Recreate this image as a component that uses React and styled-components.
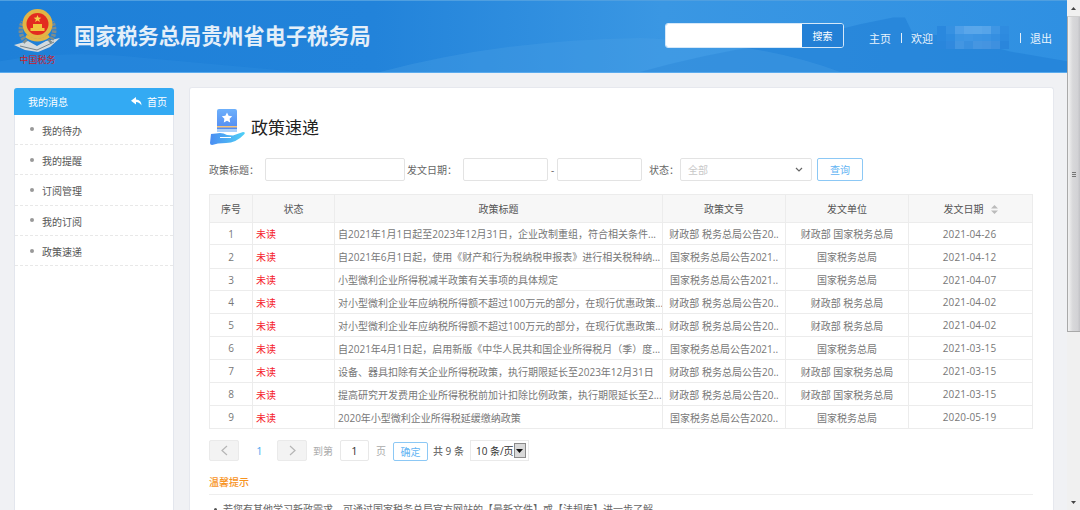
import React from "react";
import styled, { createGlobalStyle } from "styled-components";

const GlobalStyle = createGlobalStyle`
    html, body {
        margin: 0;
        padding: 0;
        height: 100%;
        overflow: hidden;
    }
    body {
        font-family: "Open Sans", "Noto Sans CJK SC", sans-serif;
        font-size: 10px;
        color: #666;
        background: #fff;
    }
    * {
        box-sizing: border-box;
    }
`;

const Page = styled.div`
    display: flex;
    width: 1080px;
    height: 510px;
    overflow: hidden;
`;

const Main = styled.div`
    flex: 1;
    min-width: 0;
    display: flex;
    flex-direction: column;
    background: #f0f1f4;
    overflow: hidden;
`;

const Scrollbar = styled.div`
    width: 13px;
    flex: none;
    display: flex;
    flex-direction: column;
    background: #f0f0f0;
`;

const ScrollArrow = styled.div`
    height: 16px;
    flex: none;
    margin-top: ${(props) => (props.$bottom ? "auto" : "0")};
    display: flex;
    align-items: center;
    justify-content: center;
`;

const ScrollThumb = styled.div`
    height: 316px;
    flex: none;
    display: flex;
    align-items: center;
    justify-content: center;
    background: linear-gradient(90deg, #f2f2f2 0%, #d8d8da 40%, #d2d2d5 80%, #c2c2c6 100%);
    border-left: 1px solid #a9a9a9;
    border-bottom: 1px solid #a9a9a9;
    border-top: 1px solid #cfcfcf;
`;

const ThumbGrip = styled.span`
    width: 4px;
    height: 5px;
    border-top: 1px solid #777;
    border-bottom: 1px solid #777;
    background: linear-gradient(#777, #777) center / 100% 1px no-repeat;
`;

const Header = styled.header`
    position: relative;
    height: 73px;
    flex: none;
    display: flex;
    align-items: center;
    padding-right: 15px;
    background: linear-gradient(90deg, #1e80d8 0%, #2283da 35%, #3a97e3 62%, #2f90e2 100%);
    border-top: 1px solid #4f9fe0;
    border-bottom: 1px solid #5aabee;
    overflow: hidden;
`;

const Mountains = styled.svg`
    position: absolute;
    left: 0;
    top: 0;
    width: 100%;
    height: 100%;
`;

const Logo = styled.div`
    position: relative;
    width: 47px;
    margin: 0 0 0 14px;
    display: flex;
    flex-direction: column;
    align-items: center;
`;

const Motto = styled.span`
    margin-top: 1px;
    font-family: "Noto Sans CJK SC", sans-serif;
    font-size: 9px;
    line-height: 11px;
    color: #c8202a;
    white-space: nowrap;
`;

const SiteName = styled.h1`
    position: relative;
    margin: 0 0 4px 13px;
    font-family: "Noto Sans CJK SC", sans-serif;
    font-size: 21.2px;
    line-height: 28px;
    font-weight: 700;
    color: #e4eff9;
    white-space: nowrap;
`;

const HeaderRight = styled.div`
    position: relative;
    margin-left: auto;
    display: flex;
    align-items: center;
    color: #fff;
`;

const SearchBox = styled.div`
    display: flex;
    width: 179px;
    height: 25px;
    margin: 0 25px 3px 0;
    border: 1px solid #d5e8f9;
    border-radius: 3px;
    overflow: hidden;
`;

const SearchInput = styled.input`
    width: 136px;
    border: none;
    outline: none;
    background: #fff;
`;

const SearchButton = styled.button`
    flex: 1;
    border: none;
    padding: 0;
    background: #2380d6;
    color: #fff;
    font: inherit;
    font-size: 10px;
`;

const NavLink = styled.a`
    margin-top: 2px;
    font-size: 11px;
    color: #eaf4fd;
    white-space: nowrap;
`;

const NavDivider = styled.span`
    width: 1px;
    height: 10px;
    margin: 2px 9px 0 10px;
    background: #e3effa;
`;

const Mosaic = styled.div`
    display: grid;
    grid-template-columns: repeat(8, 9px);
    grid-auto-rows: 7.4px;
    margin: 2px 1px 0 4px;
`;

const MosaicCell = styled.span`
    background: ${(props) => props.$color};
`;

const Body = styled.div`
    flex: 1;
    min-height: 0;
    display: flex;
    gap: 15px;
    padding: 14px 13px 0 14px;
`;

const Sidebar = styled.aside`
    width: 160px;
    flex: none;
    margin-top: 1px;
    background: #fff;
    border: 1px solid #e3e6ed;
    border-bottom: none;
    border-radius: 3px 3px 0 0;
`;

const SidebarHead = styled.div`
    height: 26.5px;
    margin: -1px -1px 0;
    padding: 0 7px 0 14px;
    display: flex;
    align-items: center;
    justify-content: space-between;
    background: #33aaf3;
    border-radius: 3px 3px 0 0;
    color: #fff;
`;

const HomeLink = styled.span`
    display: flex;
    align-items: center;
    gap: 5px;
`;

const MenuItem = styled.div`
    height: 30.4px;
    padding: 2px 0 0 15px;
    display: flex;
    align-items: center;
    gap: 8px;
    border-bottom: 1px dashed #e8e8e8;
    color: #555;
`;

const Bullet = styled.i`
    width: 4px;
    height: 4px;
    margin-bottom: 2px;
    border-radius: 50%;
    background: #999;
`;

const Panel = styled.section`
    flex: 1;
    min-width: 0;
    padding: 0 20px 0 19px;
    background: #fff;
    border: 1px solid #e6e8ee;
    border-bottom: none;
    border-radius: 3px 3px 0 0;
`;

const TitleRow = styled.div`
    height: 70px;
    display: flex;
    align-items: center;
    gap: 6px;
    padding: 8px 0 0 1px;
`;

const Title = styled.h2`
    margin: 0 0 2px;
    font-size: 17px;
    font-weight: 400;
    color: #222;
`;

const FilterRow = styled.div`
    height: 23px;
    display: flex;
    align-items: center;
    white-space: nowrap;
`;

const FilterLabel = styled.label`
    width: ${(props) => props.$width}px;
    padding-left: ${(props) => props.$inset || 0}px;
    flex: none;
    color: #666;
`;

const TextInput = styled.input`
    width: ${(props) => props.$width}px;
    height: 23px;
    flex: none;
    border: 1px solid #e3e3e3;
    border-radius: 2px;
    outline: none;
    background: #fff;
`;

const Dash = styled.span`
    width: 9px;
    flex: none;
    text-align: center;
`;

const FakeSelect = styled.div`
    width: 132px;
    height: 23px;
    flex: none;
    padding: 0 8px 0 7px;
    display: flex;
    align-items: center;
    justify-content: space-between;
    border: 1px solid #e3e3e3;
    border-radius: 2px;
    color: #c8c8c8;
`;

const QueryButton = styled.button`
    width: 46px;
    height: 23px;
    margin-left: 5px;
    padding: 0;
    border: 1px solid #8cc8f5;
    border-radius: 2px;
    background: #fff;
    color: #62b4f3;
    font: inherit;
`;

const Table = styled.div`
    width: 824px;
    margin-top: 13px;
`;

const HeadRow = styled.div`
    display: grid;
    grid-template-columns: 42px 82px 328px 123px 123px 124px;
    height: 28px;
    background: #f7f7f7;
    border: 1px solid #ececec;
    border-width: 1px 1px 0 1px;
    color: #555;
`;

const HeadCell = styled.div`
    display: flex;
    align-items: center;
    justify-content: center;
    gap: 7px;
    border-left: 1px solid #ececec;
    &:first-child {
        border-left: none;
    }
`;

const SortIcon = styled.svg`
    width: 7px;
    height: 9px;
    margin-top: 1px;
`;

const Row = styled.div`
    display: grid;
    grid-template-columns: 42px 82px 328px 123px 123px 122px;
    height: ${(props) => props.$height}px;
    border: 1px solid #ececec;
    border-width: 1px 1px 0 1px;
    &:last-child {
        height: ${(props) => props.$height + 1}px;
        border-bottom: 1px solid #ececec;
    }
`;

const Cell = styled.div`
    min-width: 0;
    padding: 0 3px;
    display: flex;
    align-items: center;
    justify-content: ${(props) => (props.$left ? "flex-start" : "center")};
    color: ${(props) => (props.$red ? "#f5222d" : "#777")};
    letter-spacing: ${(props) => (props.$date ? "0.15px" : "0")};
    border-left: 1px solid #ececec;
    white-space: nowrap;
    &:first-child {
        border-left: none;
    }
`;

const Pager = styled.div`
    height: 21px;
    margin-top: 11px;
    display: flex;
    align-items: center;
    white-space: nowrap;
    color: #aaa;
`;

const PageArrow = styled.button`
    width: 30px;
    height: 21px;
    flex: none;
    padding: 0;
    display: flex;
    align-items: center;
    justify-content: center;
    border: 1px solid #eaeaea;
    border-radius: 2px;
    background: #f3f3f3;
`;

const PageNumber = styled.span`
    width: 38px;
    flex: none;
    padding-left: 3px;
    text-align: center;
    font-size: 11px;
    color: #4ba9f0;
`;

const PagerText = styled.span`
    margin: 0 ${(props) => props.$right || 0}px 0 ${(props) => props.$left || 0}px;
    color: ${(props) => (props.$dark ? "#555" : "#aaa")};
`;

const PageInput = styled.div`
    width: 29px;
    height: 21px;
    margin-left: 7px;
    display: flex;
    align-items: center;
    justify-content: center;
    border: 1px solid #e8e8e8;
    border-radius: 2px;
    font-size: 11px;
    color: #333;
`;

const ConfirmButton = styled.button`
    width: 35px;
    height: 19px;
    margin-top: 1px;
    padding: 0;
    border: 1px solid #8cc8f5;
    border-radius: 2px;
    background: #fff;
    color: #62b4f3;
    font: inherit;
`;

const PageSize = styled.div`
    width: 59px;
    height: 21px;
    margin-left: 6px;
    padding: 0 2px 0 5px;
    display: flex;
    align-items: center;
    justify-content: space-between;
    border: 1px solid #eaeaea;
    color: #333;
`;

const SizeArrow = styled.span`
    width: 12px;
    height: 15px;
    display: flex;
    align-items: center;
    justify-content: center;
    background: #d9d9d9;
    border: 1px solid #8a8a8a;
`;

const TipTitle = styled.div`
    margin-top: 13px;
    padding-bottom: 4px;
    border-bottom: 1px solid #eeeeee;
    width: 824px;
    font-weight: 500;
    line-height: 16px;
    color: #f7931e;
`;

const TipItem = styled.div`
    margin-top: 6px;
    padding-left: 5px;
    display: flex;
    align-items: center;
    gap: 6px;
    line-height: 16px;
    color: #666;
    white-space: nowrap;
`;

const TipBullet = styled.i`
    width: 3px;
    height: 3px;
    flex: none;
    border-radius: 50%;
    background: #555;
`;

const rows = [
    { id: 1, title: "自2021年1月1日起至2023年12月31日，企业改制重组，符合相关条件...", doc: "财政部 税务总局公告20..", org: "财政部 国家税务总局", date: "2021-04-26", height: 22 },
    { id: 2, title: "自2021年6月1日起，使用《财产和行为税纳税申报表》进行相关税种纳...", doc: "国家税务总局公告2021..", org: "国家税务总局", date: "2021-04-12", height: 24 },
    { id: 3, title: "小型微利企业所得税减半政策有关事项的具体规定", doc: "国家税务总局公告2021..", org: "国家税务总局", date: "2021-04-07", height: 22 },
    { id: 4, title: "对小型微利企业年应纳税所得额不超过100万元的部分，在现行优惠政策...", doc: "财政部 税务总局公告20..", org: "财政部 税务总局", date: "2021-04-02", height: 23 },
    { id: 5, title: "对小型微利企业年应纳税所得额不超过100万元的部分，在现行优惠政策...", doc: "财政部 税务总局公告20..", org: "财政部 税务总局", date: "2021-04-02", height: 23 },
    { id: 6, title: "自2021年4月1日起，启用新版《中华人民共和国企业所得税月（季）度...", doc: "国家税务总局公告2021..", org: "国家税务总局", date: "2021-03-15", height: 23 },
    { id: 7, title: "设备、器具扣除有关企业所得税政策，执行期限延长至2023年12月31日", doc: "财政部 税务总局公告20..", org: "财政部 国家税务总局", date: "2021-03-15", height: 23 },
    { id: 8, title: "提高研究开发费用企业所得税税前加计扣除比例政策，执行期限延长至2...", doc: "财政部 税务总局公告20..", org: "财政部 国家税务总局", date: "2021-03-15", height: 23 },
    { id: 9, title: "2020年小型微利企业所得税延缓缴纳政策", doc: "国家税务总局公告2020..", org: "国家税务总局", date: "2020-05-19", height: 23 },
];

const mosaicColors = [
    "#2a88de", "#3691e2", "#4f9fe8", "#5aa6ea", "#5aa7ea", "#56a4e9", "#3f96e4", "#2f8ce0",
    "#2a88de", "#2f8ce0", "#3d95e3", "#3f96e4", "#3c94e3", "#3a93e3", "#358fe1", "#2d8adf",
    "#2986dc", "#3089de", "#4396e2", "#3a90df", "#4696e1", "#4594e0", "#3e90df", "#2a86dc",
];

const menu = ["我的待办", "我的提醒", "订阅管理", "我的订阅", "政策速递"];

const Emblem = () => (
    <svg width="47" height="44" viewBox="0 0 47 44">
        <path d="M0 36 L14 32 L23 37 L32 32 L46 29 L36 38 L24 43 L11 41 Z" fill="#d3dadd" />
        <path d="M6 37 L23 41 L40 33" stroke="#75838a" strokeWidth="1" fill="none" />
        <path d="M12 33 A16 16 0 0 1 9 13" stroke="#7f8d8c" strokeWidth="4.5" strokeDasharray="2.5 1" fill="none" />
        <path d="M35 33 A16 16 0 0 0 38 13" stroke="#7f8d8c" strokeWidth="4.5" strokeDasharray="2.5 1" fill="none" />
        <circle cx="23.5" cy="15" r="15" fill="#e3b545" />
        <circle cx="23.5" cy="15" r="11" fill="#e32b20" />
        <path d="M23.5 6 l1 2.6 2.8.1 -2.2 1.7 .8 2.7 -2.4-1.6 -2.4 1.6 .8-2.7 -2.2-1.7 2.8-.1 Z" fill="#f6d04a" />
        <path d="M16.5 19 h14 v3 h-14 Z M19 15 h9 v4 h-9 Z" fill="#f0c53f" />
        <path d="M12 27 Q23.5 35 35 27" stroke="#e3b545" strokeWidth="3" fill="none" />
    </svg>
);

const BookHand = () => (
    <svg width="35" height="37" viewBox="0 0 35 37">
        <defs>
            <linearGradient id="bookFill" x1="0" y1="0" x2="0" y2="1">
                <stop offset="0" stopColor="#6db0fb" />
                <stop offset="1" stopColor="#4f86f0" />
            </linearGradient>
            <linearGradient id="handFill" x1="0" y1="0" x2="1" y2="0">
                <stop offset="0" stopColor="#4a8df2" />
                <stop offset="1" stopColor="#4fd0f6" />
            </linearGradient>
        </defs>
        <path d="M7 2 Q7 0 9 0 H25 Q27 0 27 2 V23 H7 Z" fill="url(#bookFill)" />
        <path d="M7 17 H27 V18.5 H7 Z" fill="#f5c27a" />
        <path d="M7 20 H27 V23 H7 Z" fill="#a9d0fb" />
        <path d="M17 3.5 l1.6 3.3 3.6.5 -2.6 2.5 .6 3.6 -3.2-1.7 -3.2 1.7 .6-3.6 -2.6-2.5 3.6-.5 Z" fill="#fff" />
        <path d="M1 25 L6 24.5 Q12 23 17 26 L23 26.5 L33 23 Q36 23 34 25.5 Q26 34 16 34 L8 34.5 L2 36 Q0 36 0 34 Z" fill="url(#handFill)" />
        <path d="M10 28.5 H21" stroke="#fff" strokeWidth="1" />
    </svg>
);

const PagerChevron = ({ left }) => (
    <svg width="7" height="11" viewBox="0 0 7 11">
        <path d={left ? "M6 1 L1 5.5 L6 10" : "M1 1 L6 5.5 L1 10"} stroke="#b5b5b5" strokeWidth="1.2" fill="none" />
    </svg>
);

export default function App() {
    return (
        <Page>
            <GlobalStyle />
            <Main>
                <Header>
                    <Mountains viewBox="0 0 1067 73" preserveAspectRatio="none">
                        <path d="M0 73 L0 62 Q60 50 140 58 L300 73 Z" fill="#2a8ade" opacity="0.5" />
                        <path d="M640 73 Q720 50 790 42 L860 24 L893 17 L905 17 L912 32 L960 38 L1010 52 L1067 62 L1067 73 Z" fill="#1f7ed6" opacity="0.55" />
                        <path d="M380 73 Q500 40 640 38 Q760 42 840 73 Z" fill="#4aa0e6" opacity="0.35" />
                    </Mountains>
                    <Logo>
                        <Emblem />
                        <Motto>中国税务</Motto>
                    </Logo>
                    <SiteName>国家税务总局贵州省电子税务局</SiteName>
                    <HeaderRight>
                        <SearchBox>
                            <SearchInput />
                            <SearchButton>搜索</SearchButton>
                        </SearchBox>
                        <NavLink>主页</NavLink>
                        <NavDivider />
                        <NavLink>欢迎</NavLink>
                        <Mosaic>
                            {mosaicColors.map((color, index) => (
                                <MosaicCell key={index} $color={color} />
                            ))}
                        </Mosaic>
                        <NavDivider />
                        <NavLink>退出</NavLink>
                    </HeaderRight>
                </Header>
                <Body>
                    <Sidebar>
                        <SidebarHead>
                            <span>我的消息</span>
                            <HomeLink>
                                <svg width="11" height="9" viewBox="0 0 11 9">
                                    <path d="M5 0 L0 3.8 L5 7.5 V5 Q8.5 5 10.5 8.5 Q10.5 2.6 5 2.4 Z" fill="#fff" />
                                </svg>
                                首页
                            </HomeLink>
                        </SidebarHead>
                        {menu.map((item) => (
                            <MenuItem key={item}>
                                <Bullet />
                                {item}
                            </MenuItem>
                        ))}
                    </Sidebar>
                    <Panel>
                        <TitleRow>
                            <BookHand />
                            <Title>政策速递</Title>
                        </TitleRow>
                        <FilterRow>
                            <FilterLabel $width={56}>政策标题：</FilterLabel>
                            <TextInput $width={140} />
                            <FilterLabel $width={58} $inset={2}>发文日期：</FilterLabel>
                            <TextInput $width={85} />
                            <Dash>-</Dash>
                            <TextInput $width={85} />
                            <FilterLabel $width={38} $inset={7}>状态：</FilterLabel>
                            <FakeSelect>
                                全部
                                <svg width="8" height="5" viewBox="0 0 8 5">
                                    <path d="M1 1 L4 4 L7 1" stroke="#666" strokeWidth="1.2" fill="none" />
                                </svg>
                            </FakeSelect>
                            <QueryButton>查询</QueryButton>
                        </FilterRow>
                        <Table>
                            <HeadRow>
                                <HeadCell>序号</HeadCell>
                                <HeadCell>状态</HeadCell>
                                <HeadCell>政策标题</HeadCell>
                                <HeadCell>政策文号</HeadCell>
                                <HeadCell>发文单位</HeadCell>
                                <HeadCell>
                                    发文日期
                                    <SortIcon viewBox="0 0 7 9">
                                        <path d="M3.5 0 L7 3.5 H0 Z M0 5.5 H7 L3.5 9 Z" fill="#bbb" />
                                    </SortIcon>
                                </HeadCell>
                            </HeadRow>
                            {rows.map((row) => (
                                <Row key={row.id} $height={row.height}>
                                    <Cell>{row.id}</Cell>
                                    <Cell $left $red>未读</Cell>
                                    <Cell $left>{row.title}</Cell>
                                    <Cell>{row.doc}</Cell>
                                    <Cell>{row.org}</Cell>
                                    <Cell $date>{row.date}</Cell>
                                </Row>
                            ))}
                        </Table>
                        <Pager>
                            <PageArrow><PagerChevron left /></PageArrow>
                            <PageNumber>1</PageNumber>
                            <PageArrow><PagerChevron /></PageArrow>
                            <PagerText $left={6}>到第</PagerText>
                            <PageInput>1</PageInput>
                            <PagerText $left={7} $right={7}>页</PagerText>
                            <ConfirmButton>确定</ConfirmButton>
                            <PagerText $left={5} $dark>共 9 条</PagerText>
                            <PageSize>
                                10 条/页
                                <SizeArrow>
                                    <svg width="7" height="4" viewBox="0 0 7 4">
                                        <path d="M0 0 H7 L3.5 4 Z" fill="#111" />
                                    </svg>
                                </SizeArrow>
                            </PageSize>
                        </Pager>
                        <TipTitle>温馨提示</TipTitle>
                        <TipItem>
                            <TipBullet />
                            若您有其他学习新政需求，可通过国家税务总局官方网站的【最新文件】或【法规库】进一步了解。
                        </TipItem>
                    </Panel>
                </Body>
            </Main>
            <Scrollbar>
                <ScrollArrow>
                    <svg width="5" height="3" viewBox="0 0 5 3">
                        <path d="M2.5 0 L5 3 H0 Z" fill="#444" />
                    </svg>
                </ScrollArrow>
                <ScrollThumb>
                    <ThumbGrip />
                </ScrollThumb>
                <ScrollArrow $bottom>
                    <svg width="5" height="3" viewBox="0 0 5 3">
                        <path d="M0 0 H5 L2.5 3 Z" fill="#444" />
                    </svg>
                </ScrollArrow>
            </Scrollbar>
        </Page>
    );
}
